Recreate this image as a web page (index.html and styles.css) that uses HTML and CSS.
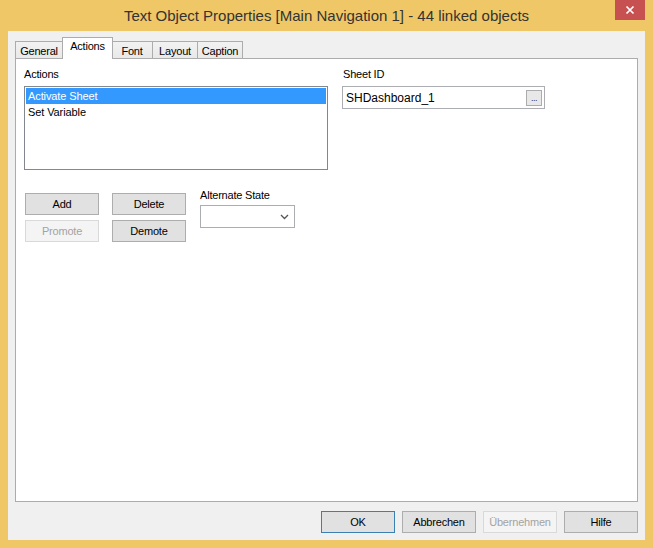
FILE: index.html
```html
<!DOCTYPE html>
<html>
<head>
<meta charset="utf-8">
<link rel="stylesheet" href="styles.css">
</head>
<body>
<div class="window">
  <div class="titlebar">
    <div class="title">Text Object Properties [Main Navigation 1] - 44 linked objects</div>
    <div class="close">
      <svg width="10" height="10" viewBox="0 0 10 10"><path d="M1.5 1.5 L8.5 8.5 M8.5 1.5 L1.5 8.5" stroke="#fff" stroke-width="1.7" fill="none"/></svg>
    </div>
  </div>
  <div class="client">
    <div class="tabs">
      <div class="tab w-general">General</div>
      <div class="tab active w-actions">Actions</div>
      <div class="tab w-font">Font</div>
      <div class="tab w-layout">Layout</div>
      <div class="tab w-caption">Caption</div>
    </div>
    <div class="panel">
      <div class="col-left">
        <div class="label">Actions</div>
        <div class="listbox">
          <div class="item selected">Activate Sheet</div>
          <div class="item">Set Variable</div>
        </div>
        <div class="controls">
          <div class="btn-grid">
            <div class="btn">Add</div>
            <div class="btn">Delete</div>
            <div class="btn disabled">Promote</div>
            <div class="btn">Demote</div>
          </div>
          <div class="alt">
            <div class="label">Alternate State</div>
            <div class="select">
              <svg width="9" height="6" viewBox="0 0 9 6"><path d="M1 1 L4.5 4.5 L8 1" stroke="#555" stroke-width="1.3" fill="none"/></svg>
            </div>
          </div>
        </div>
      </div>
      <div class="col-right">
        <div class="label">Sheet ID</div>
        <div class="textbox">
          <span class="tb-text">SHDashboard_1</span>
          <div class="dots">...</div>
        </div>
      </div>
    </div>
    <div class="footer">
      <div class="btn default">OK</div>
      <div class="btn">Abbrechen</div>
      <div class="btn disabled">Übernehmen</div>
      <div class="btn">Hilfe</div>
    </div>
  </div>
</div>
</body>
</html>
```

FILE: styles.css
```css
html, body {
  margin: 0;
  padding: 0;
}
body {
  width: 653px;
  height: 548px;
  overflow: hidden;
}
.window {
  width: 653px;
  height: 548px;
  background: #f0c766;
  display: flex;
  flex-direction: column;
  font-family: "Liberation Sans", Arial, sans-serif;
  font-size: 11px;
  color: #000;
  box-sizing: border-box;
}
.titlebar {
  height: 31px;
  display: flex;
  align-items: flex-start;
  flex-shrink: 0;
}
.title {
  flex: 1;
  padding-left: 38px;
  padding-top: 7px;
  font-size: 15px;
  line-height: 17px;
  text-align: center;
  color: #333;
  white-space: nowrap;
}
.close {
  width: 30px;
  height: 20px;
  margin-right: 8px;
  background: #c75050;
  display: flex;
  align-items: center;
  justify-content: center;
}
.client {
  flex: 1;
  margin: 0 8px 8px 8px;
  background: #f0f0f0;
  padding: 7px;
  display: flex;
  flex-direction: column;
  min-height: 0;
}
.tabs {
  height: 20px;
  display: flex;
  align-items: flex-end;
  flex-shrink: 0;
}
.tab {
  height: 18px;
  box-sizing: border-box;
  border: 1px solid #acacac;
  border-bottom: none;
  background: linear-gradient(#f2f2f2, #e8e8e8);
  margin-bottom: -1px;
  display: flex;
  align-items: center;
  justify-content: center;
  letter-spacing: -0.2px;
}
.tab + .tab {
  border-left: none;
}
.tab.active {
  height: 22px;
  background: #fff;
  position: relative;
  z-index: 1;
  border-left: 1px solid #acacac;
  padding-bottom: 5px;
  margin-left: -1px;
  margin-right: -1px;
}
.tab.active + .tab {
  border-left: none;
}
.w-general { width: 48px; }
.w-actions { width: 51px; }
.w-font { width: 41px; }
.w-layout { width: 45px; }
.w-caption { width: 45px; }
.panel {
  flex: 1;
  background: #fff;
  border: 1px solid #acacac;
  padding: 9px 8px 8px 8px;
  display: flex;
  align-items: flex-start;
  min-height: 0;
}
.label {
  line-height: 13px;
  height: 13px;
  letter-spacing: -0.2px;
}
.col-left {
  width: 304px;
  flex-shrink: 0;
}
.listbox {
  margin-top: 5px;
  height: 84px;
  box-sizing: border-box;
  border: 1px solid #828790;
  padding: 1px;
}
.item {
  height: 16px;
  line-height: 16px;
  padding-left: 2px;
  letter-spacing: -0.1px;
}
.item.selected {
  background: #3399ff;
  color: #fff;
}
.controls {
  margin-top: 19px;
  display: flex;
  align-items: flex-start;
  padding-left: 1px;
}
.btn-grid {
  margin-top: 4px;
  display: grid;
  grid-template-columns: 74px 74px;
  column-gap: 13px;
  row-gap: 5px;
}
.btn {
  width: 74px;
  height: 22px;
  box-sizing: border-box;
  border: 1px solid #adadad;
  background: #e1e1e1;
  display: flex;
  align-items: center;
  justify-content: center;
  letter-spacing: -0.2px;
}
.btn.disabled {
  background: #f4f4f4;
  border-color: #d9d9d9;
  color: #a3a3a3;
}
.btn.default {
  border-color: #3c7fb1;
  background: #e1e1e1;
}
.alt {
  margin-left: 14px;
}
.select {
  margin-top: 3px;
  width: 95px;
  height: 23px;
  box-sizing: border-box;
  border: 1px solid #abadb3;
  background: #fff;
  display: flex;
  align-items: center;
  justify-content: flex-end;
  padding-right: 5px;
}
.col-right {
  margin-left: 14px;
}
.col-right .label {
  padding-left: 1px;
}
.textbox {
  margin-top: 5px;
  width: 203px;
  height: 23px;
  box-sizing: border-box;
  border: 1px solid #abadb3;
  background: #fff;
  display: flex;
  align-items: center;
  justify-content: space-between;
  padding: 0 2px 0 3px;
}
.tb-text {
  font-size: 12px;
}
.dots {
  width: 16px;
  height: 16px;
  box-sizing: border-box;
  border: 1px solid #acacac;
  background: #e8e8e8;
  font-size: 9px;
  line-height: 14px;
  color: #333;
  text-align: center;
  letter-spacing: -0.5px;
}
.footer {
  margin-top: 9px;
  display: flex;
  justify-content: flex-end;
  gap: 7px;
  flex-shrink: 0;
}
```
